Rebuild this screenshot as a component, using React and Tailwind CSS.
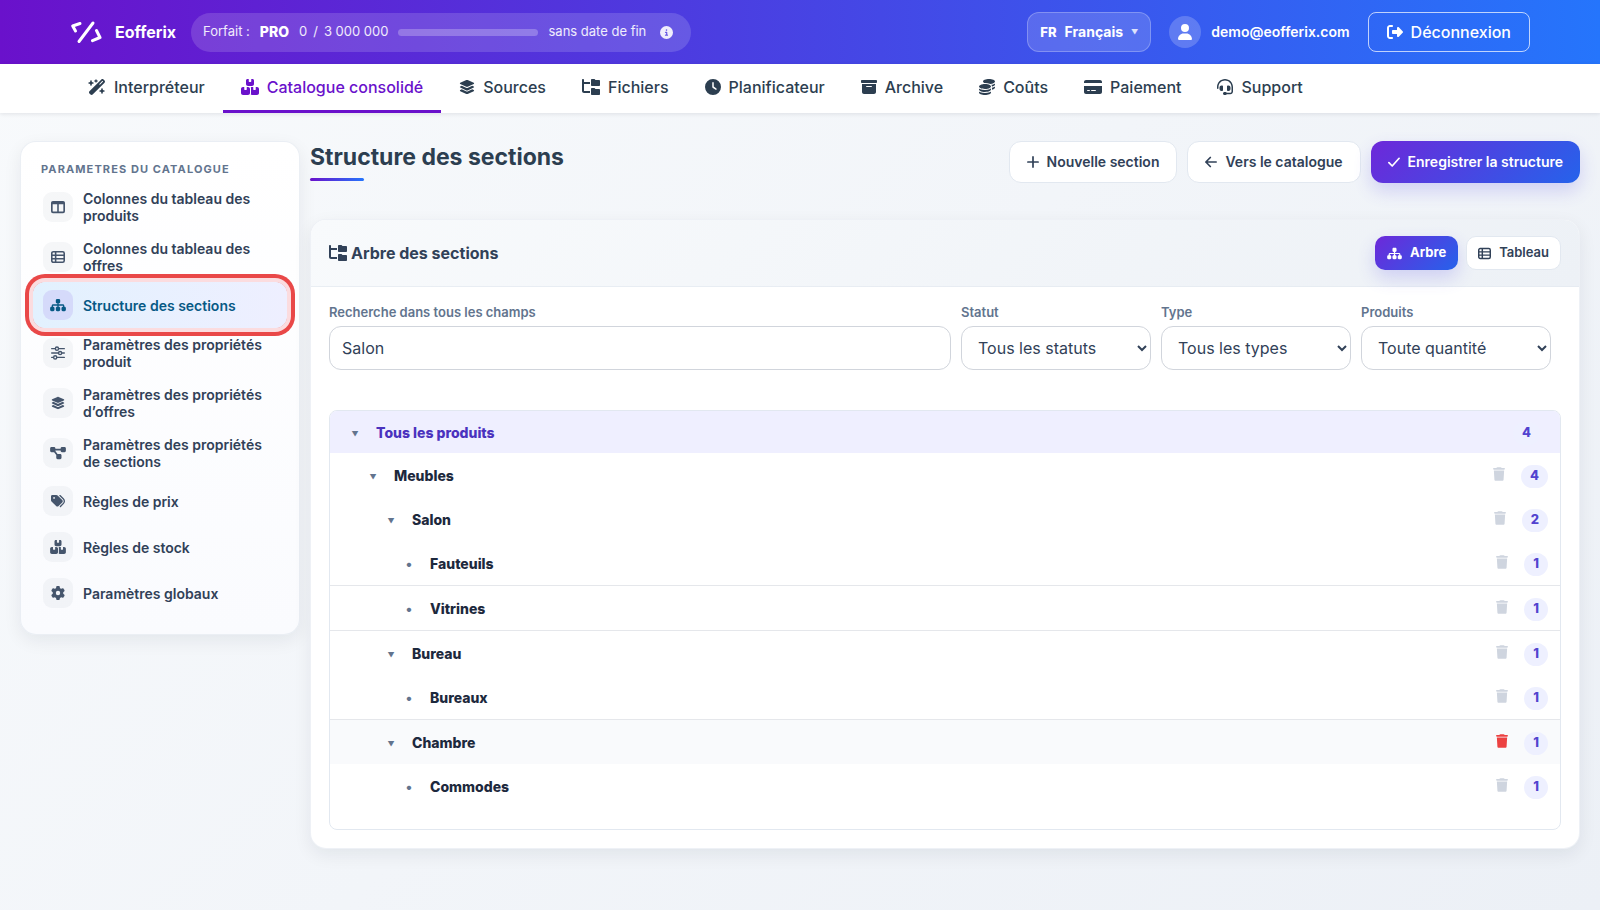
import React from "react";
import {
  FaWandMagicSparkles, FaBoxesStacked, FaLayerGroup, FaFolderTree, FaClock, FaBoxArchive, FaCoins,
  FaCreditCard, FaHeadset, FaCircleInfo, FaUser, FaRightFromBracket,
  FaSitemap, FaTags, FaGear, FaDiagramProject, FaTrash,
} from "react-icons/fa6";

function ColumnsIcon({ className }) {
  return (
    <svg viewBox="0 0 16 16" className={className} fill="currentColor" fillRule="evenodd" aria-hidden="true">
      <path d="M2.200 1h11.600A2.200 2.200 0 0 1 16 3.200v9.600a2.200 2.200 0 0 1-2.200 2.200H2.200A2.200 2.200 0 0 1 0 12.800V3.200A2.200 2.200 0 0 1 2.200 1ZM1.900 4.800v7.700c0 .4.3.7.7.7h4.500V4.800Zm7 0v8.400h4.500c.4 0 .7-.3.7-.7V4.800Z" />
    </svg>
  );
}

function TableIcon({ className }) {
  return (
    <svg viewBox="0 0 16 16" className={className} fill="none" stroke="currentColor" strokeWidth="1.800" aria-hidden="true">
      <rect x="0.900" y="1.900" width="14.200" height="12.200" rx="1.800" />
      <path d="M1 6h14M1 10h14M5.300 2v12" />
    </svg>
  );
}

function SlidersIcon({ className }) {
  return (
    <svg viewBox="0 0 16 16" className={className} fill="none" stroke="currentColor" strokeWidth="1.600" strokeLinecap="round" aria-hidden="true">
      <path d="M.8 3h4M8.800 3h6.400M.8 8h7.600M12.400 8h2.800M.8 13h2M6.800 13h8.400" />
      <circle cx="6.800" cy="3" r="1.800" />
      <circle cx="10.400" cy="8" r="1.800" />
      <circle cx="4.800" cy="13" r="1.800" />
    </svg>
  );
}

function LineIcon({ d }) {
  return (
    <svg viewBox="0 0 12 12" className="size-3" fill="none" stroke="currentColor" strokeWidth="1.700" strokeLinecap="round" strokeLinejoin="round" aria-hidden="true">
      <path d={d} />
    </svg>
  );
}

function Logo() {
  return (
    <svg viewBox="0 0 32 24" className="h-6 w-8" fill="none" stroke="white" strokeWidth="3" strokeLinecap="round" strokeLinejoin="round" aria-hidden="true">
      <path d="M23 3 9 21.500" />
      <path d="M10 3.500 2.700 6 5.500 11" />
      <path d="M26.500 10.500 30 17.500 22.500 20.700" />
    </svg>
  );
}

const NAV = [
  ["Interpréteur", FaWandMagicSparkles, "w-[18px]"],
  ["Catalogue consolidé", FaBoxesStacked, "w-[18px]", true],
  ["Sources", FaLayerGroup, "w-4"],
  ["Fichiers", FaFolderTree, "w-[18px]"],
  ["Planificateur", FaClock, "w-4"],
  ["Archive", FaBoxArchive, "w-4"],
  ["Coûts", FaCoins, "w-4"],
  ["Paiement", FaCreditCard, "w-[18px]"],
  ["Support", FaHeadset, "w-4"],
];

const SIDE = [
  ["Colonnes du tableau des produits", ColumnsIcon],
  ["Colonnes du tableau des offres", TableIcon],
  ["Structure des sections", FaSitemap, true],
  ["Paramètres des propriétés produit", SlidersIcon],
  ["Paramètres des propriétés d’offres", FaLayerGroup],
  ["Paramètres des propriétés de sections", FaDiagramProject],
  ["Règles de prix", FaTags],
  ["Règles de stock", FaBoxesStacked],
  ["Paramètres globaux", FaGear],
];

const WIDE = [FaSitemap, FaDiagramProject, FaBoxesStacked];

const ROWS = [
  { name: "Meubles", count: 4, open: true, indent: "pl-[34px]" },
  { name: "Salon", count: 2, open: true, indent: "pl-[52px]" },
  { name: "Fauteuils", count: 1, indent: "pl-[70px]", line: true },
  { name: "Vitrines", count: 1, indent: "pl-[70px]", line: true },
  { name: "Bureau", count: 1, open: true, indent: "pl-[52px]" },
  { name: "Bureaux", count: 1, indent: "pl-[70px]", line: true },
  { name: "Chambre", count: 1, open: true, indent: "pl-[52px]", hot: true },
  { name: "Commodes", count: 1, indent: "pl-[70px]" },
];

const FILTERS = [
  ["statut", "Statut", "Tous les statuts"],
  ["type", "Type", "Tous les types"],
  ["produits", "Produits", "Toute quantité"],
];

function Header() {
  return (
    <header className="flex h-16 items-center justify-between bg-linear-to-r/srgb from-[#6a11cb] to-[#2575fc] px-[70px] text-white">
      <div className="flex items-center">
        <a href="#" className="flex items-center gap-[13px] text-base font-bold">
          <Logo />
          Eofferix
        </a>
        <div className="ml-[15px] flex h-[39px] items-center gap-2.5 rounded-full bg-white/15 pr-[18px] pl-3 text-[13px] text-white/90">
          <span>Forfait :</span>
          <b className="text-sm font-extrabold text-white">PRO</b>
          <span className="flex gap-1.5"><span>0</span><span>/</span><span>3 000 000</span></span>
          <span className="h-[7px] w-[140px] rounded-full bg-white/25" />
          <span>sans date de fin</span>
          <button type="button" aria-label="Informations" className="ml-1"><FaCircleInfo className="size-[13px]" /></button>
        </div>
      </div>
      <div className="flex items-center">
        <button type="button" className="flex h-10 items-center gap-2 rounded-xl border border-white/25 bg-white/15 px-3 text-sm font-bold">
          <span className="text-[13px] font-extrabold">FR</span>
          <span>Français</span>
          <span className="pt-0.5 text-[7px] text-white/80">▼</span>
        </button>
        <span className="ml-[18px] flex size-8 items-center justify-center rounded-full bg-white/20"><FaUser className="size-4" /></span>
        <span className="ml-2.5 text-sm font-semibold">demo@eofferix.com</span>
        <button type="button" className="ml-[18px] flex h-10 items-center gap-2 rounded-lg border border-white/70 px-[18px] text-base font-medium">
          <FaRightFromBracket className="size-4" />
          Déconnexion
        </button>
      </div>
    </header>
  );
}

function Nav() {
  return (
    <nav className="flex h-[49px] bg-white px-[70px] shadow-[0_1px_4px_rgba(15,23,42,0.1)]">
      {NAV.map(([label, Icon, width, active]) => (
        <a
          key={label}
          href="#"
          className={
            "flex items-center gap-2 border-b-3 px-[18px] text-base font-medium " +
            (active ? "border-[#6a11cb] text-[#6a11cb]" : "border-transparent text-[#2c3e50]")
          }
        >
          <Icon className={"h-4 shrink-0 " + width} />
          {label}
        </a>
      ))}
    </nav>
  );
}

function Sidebar() {
  return (
    <aside className="w-[280px] shrink-0 rounded-2xl border border-slate-200/70 bg-linear-to-b from-white to-[#fafbfe] px-3 pt-[18px] pb-[18px] shadow-[0_6px_18px_rgba(15,23,42,0.07)]">
      <h2 className="mb-1 px-2 text-[11px] leading-[18px] font-bold tracking-widest text-slate-500">PARAMETRES DU CATALOGUE</h2>
      <ul>
        {SIDE.map(([label, Icon, active]) => (
          <li key={label}>
            <a
              href="#"
              className={
                "flex items-center gap-2.5 rounded-xl px-2.5 py-2 text-sm leading-[17px] font-semibold " +
                (active
                  ? "relative bg-linear-to-r from-[#e2f1fe] to-[#eeefff] text-[#075985] shadow-[0_0_0_4px_#fbdcdf,0_0_0_8px_#e94848]"
                  : "text-slate-700")
              }
            >
              <span className={"flex size-[30px] shrink-0 items-center justify-center rounded-[9px] " + (active ? "bg-[#d5dafa]" : "bg-slate-500/6 text-slate-600")}>
                <Icon className={"h-3.5 " + (WIDE.includes(Icon) ? "w-4" : "w-3.5")} />
              </span>
              {label}
            </a>
          </li>
        ))}
      </ul>
    </aside>
  );
}

const BTN = "flex h-[42px] items-center gap-2 rounded-xl text-sm font-semibold ";
const LIGHT = "border border-slate-200 bg-white text-slate-700 ";
const PRIMARY = "bg-linear-135/srgb from-[#6d28d9] to-[#2563eb] text-white shadow-[0_8px_18px_rgba(79,70,229,0.2)] ";
const TOGGLE = "w-[18px] pt-1 text-center text-[7px] text-slate-500";

function Badge({ children }) {
  return (
    <span className="flex h-[23px] items-center rounded-full bg-[#eef0ff] px-[9px] text-[13px] font-extrabold text-[#5243cf]">
      {children}
    </span>
  );
}

function Tree() {
  return (
    <div className="mt-10 overflow-hidden rounded-lg border border-slate-200 pb-[21px]">
      <div className="flex h-[42px] items-center bg-[#efefff] pt-0.5 pr-[20px] pl-4">
        <button type="button" aria-label="Replier" className={TOGGLE}>▼</button>
        <span className="ml-3 flex-1 text-sm font-extrabold text-[#4a32be]">Tous les produits</span>
        <Badge>4</Badge>
      </div>
      {ROWS.map((r) => (
        <div
          key={r.name}
          className={
            "flex items-center pt-0.5 pr-3 " + r.indent +
            (r.line ? " h-[45px] border-b border-gray-200" : " h-11") +
            (r.hot ? " bg-[#f9fafc]" : "")
          }
        >
          {r.open ? (
            <button type="button" aria-label="Replier" className={TOGGLE}>▼</button>
          ) : (
            <span className="w-[18px] text-center text-sm text-slate-500">•</span>
          )}
          <span className="ml-3 flex-1 text-sm font-extrabold text-slate-800">{r.name}</span>
          <button type="button" aria-label={"Supprimer " + r.name} className={"mr-4 pb-1 " + (r.hot ? "text-[#ec4141]" : "text-[#cfd5df]")}>
            <FaTrash className="h-3.5 w-3" />
          </button>
          <Badge>{r.count}</Badge>
        </div>
      ))}
    </div>
  );
}

export default function App() {
  return (
    <div className="min-h-screen bg-linear-135 from-[#f8fafc] to-[#ecf0f6] font-['Inter','Liberation_Sans',sans-serif]">
      <Header />
      <Nav />
      <div className="flex items-start gap-2.5 px-5 pt-7 pb-[61px]">
        <Sidebar />
        <main className="min-w-0 flex-1">
          <div className="mb-9 flex items-start justify-between">
            <div>
              <h1 className="text-[23px] leading-8 font-bold text-[#2c3e50]">Structure des sections</h1>
              <div className="mt-[5px] h-[3px] w-[54px] rounded-full bg-linear-to-r/srgb from-[#6a11cb] to-[#2575fc]" />
            </div>
            <div className="flex gap-2.5">
              <button type="button" className={BTN + LIGHT + "px-[17px]"}><LineIcon d="M6 .9v10.200M.9 6h10.200" />Nouvelle section</button>
              <button type="button" className={BTN + LIGHT + "px-[17px]"}><LineIcon d="M11.200 6H.9M5.300 1.500.9 6l4.400 4.500" />Vers le catalogue</button>
              <button type="button" className={BTN + PRIMARY + "px-[17px]"}><LineIcon d="M.9 6.700 4.200 10 11.100 2.300" />Enregistrer la structure</button>
            </div>
          </div>
          <section className="overflow-hidden rounded-2xl border border-slate-200/60 bg-white shadow-[0_6px_18px_rgba(15,23,42,0.07)]">
            <div className="flex h-[67px] items-center justify-between border-b border-slate-200/70 bg-linear-135 from-[#f8fafc] to-[#edf1f6] px-[18px]">
              <h2 className="flex items-center gap-1 text-base font-bold text-slate-700"><FaFolderTree className="h-4 w-[18px]" />Arbre des sections</h2>
              <div className="flex gap-2">
                <button type="button" className={PRIMARY + "flex h-[34px] items-center gap-2 rounded-[10px] px-3 text-[13px] font-bold"}><FaSitemap className="h-[13px] w-[15px]" />Arbre</button>
                <button type="button" className={LIGHT + "flex h-[34px] items-center gap-2 rounded-[10px] px-[11px] text-[13px] font-semibold"}><TableIcon className="size-[13px]" />Tableau</button>
              </div>
            </div>
            <div className="px-[18px] pt-4 pb-[18px]">
              <div className="grid grid-cols-[1fr_190px_190px_190px] gap-2.5 pr-2.5">
                <div className="flex flex-col gap-[5px]">
                  <label htmlFor="q" className="text-[13px] leading-[18px] font-semibold text-slate-500">Recherche dans tous les champs</label>
                  <input id="q" defaultValue="Salon" className="h-11 rounded-xl border border-gray-300 px-3 text-base text-slate-700" />
                </div>
                {FILTERS.map(([id, label, value]) => (
                  <div key={id} className="flex flex-col gap-[5px]">
                    <label htmlFor={id} className="text-[13px] leading-[18px] font-semibold text-slate-500">{label}</label>
                    <select id={id} className="h-11 w-full rounded-xl border border-gray-300 bg-white px-3 text-base text-slate-700">
                      <option>{value}</option>
                    </select>
                  </div>
                ))}
              </div>
              <Tree />
            </div>
          </section>
        </main>
      </div>
    </div>
  );
}
